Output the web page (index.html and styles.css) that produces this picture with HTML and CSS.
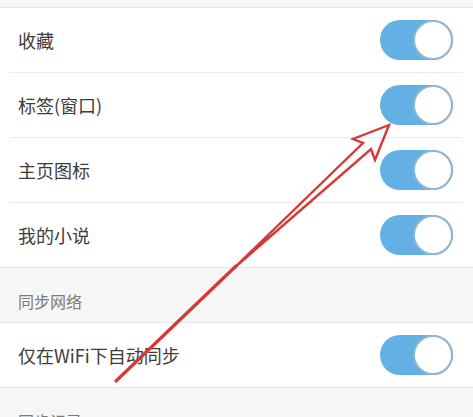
FILE: index.html
```html
<!DOCTYPE html>
<html lang="zh">
<head>
<meta charset="utf-8">
<link rel="stylesheet" href="styles.css">
</head>
<body>
<div class="page">
  <div class="top-gap"></div>
  <div class="group">
    <div class="row"><span class="label">收藏</span><span class="toggle"><span class="knob"></span></span></div>
    <div class="row"><span class="label">标签(窗口)</span><span class="toggle"><span class="knob"></span></span></div>
    <div class="row"><span class="label">主页图标</span><span class="toggle"><span class="knob"></span></span></div>
    <div class="row last"><span class="label">我的小说</span><span class="toggle"><span class="knob"></span></span></div>
  </div>
  <div class="section">同步网络</div>
  <div class="group">
    <div class="row last"><span class="label">仅在WiFi下自动同步</span><span class="toggle"><span class="knob"></span></span></div>
  </div>
  <div class="section">同步记录</div>
  <svg class="arrow" width="473" height="417" viewBox="0 0 473 417">
    <polygon points="234,268 363,143 353,139 389,125 375,160 371,149" fill="none" stroke="#d93636" stroke-width="2.4" stroke-linejoin="miter"/>
    <line x1="236" y1="266" x2="116" y2="381" stroke="#d93636" stroke-width="3.2" stroke-linecap="round"/>
  </svg>
</div>
</body>
</html>
```
FILE: styles.css
```css
html, body {
  margin: 0;
  padding: 0;
}
body {
  background: #f6f6f6;
  font-family: "Noto Sans CJK SC", "Noto Sans", sans-serif;
  overflow: hidden;
}
.page {
  position: relative;
  width: 473px;
  height: 417px;
  overflow: hidden;
}
.top-gap {
  height: 7px;
  border-bottom: 1px solid #e6e6e6;
}
.group {
  background: #fff;
  border-bottom: 1px solid #e4e4e4;
}
.row {
  height: 64px;
  margin-left: 10px;
  margin-right: 11px;
  padding-left: 8px;
  padding-right: 9px;
  display: flex;
  align-items: center;
  justify-content: space-between;
  border-bottom: 1px solid #ebebeb;
}
.row.last {
  border-bottom: none;
}
.label {
  font-size: 18px;
  color: #3c3c3c;
}
.toggle {
  position: relative;
  width: 73px;
  height: 40px;
  border-radius: 20px;
  background: #62b0e4;
  display: flex;
  justify-content: flex-end;
}
.knob {
  width: 36px;
  height: 36px;
  border-radius: 50%;
  background: #fff;
  border: 2px solid #8fb7cf;
}
.section {
  height: 55px;
  padding-left: 18px;
  padding-bottom: 9px;
  display: flex;
  align-items: flex-end;
  box-sizing: border-box;
  font-size: 16px;
  color: #7a7a7a;
  border-bottom: 1px solid #e4e4e4;
}
.arrow {
  position: absolute;
  left: 0;
  top: 0;
}
```
